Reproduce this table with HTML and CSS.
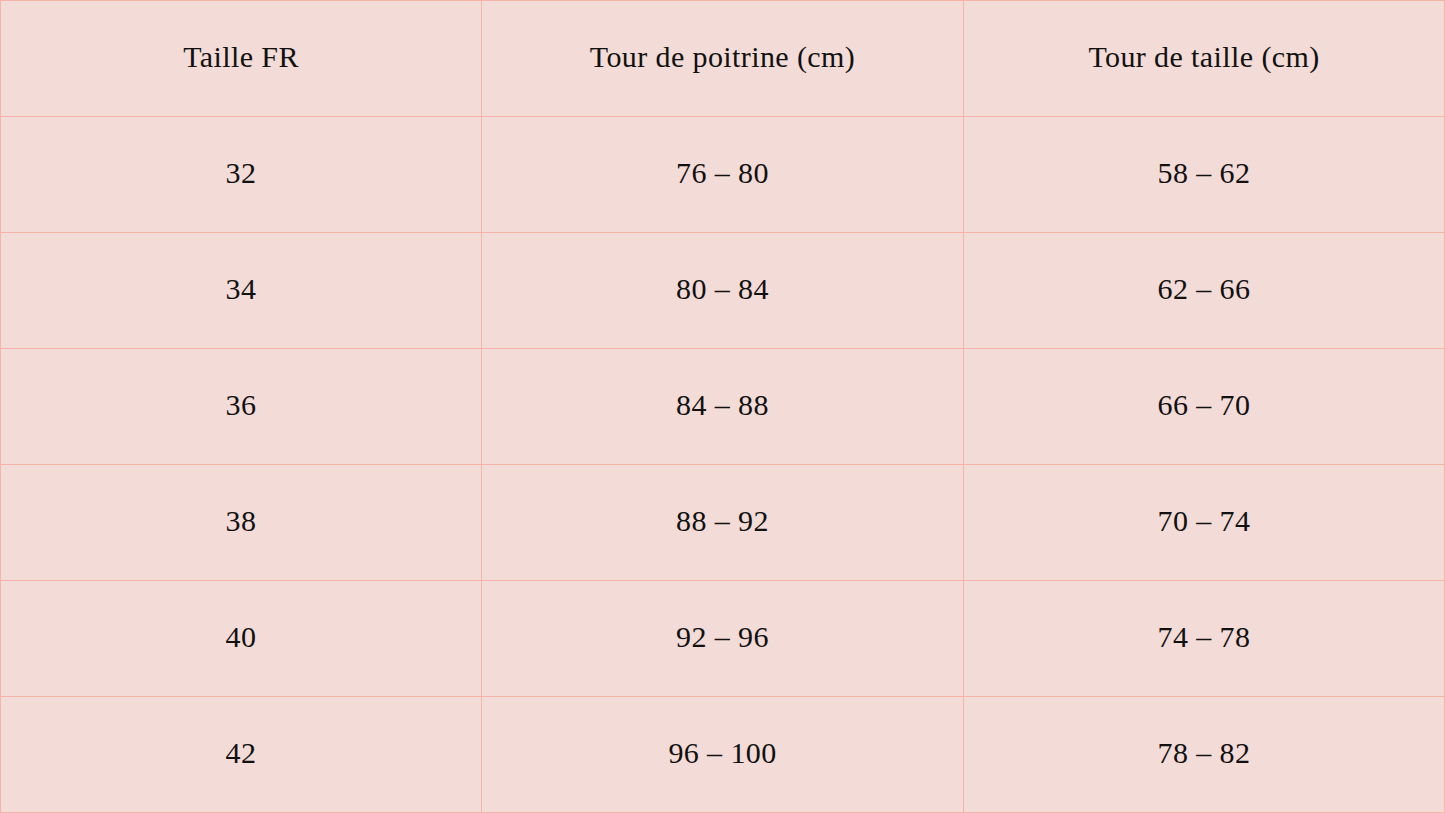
FILE: index.html
```html
<!DOCTYPE html>
<html lang="fr">
<head>
<meta charset="utf-8">
<title>Guide des tailles</title>
<link rel="stylesheet" href="styles.css">
</head>
<body>
<div class="chart">
  <div class="cell">Taille FR</div>
  <div class="cell">Tour de poitrine (cm)</div>
  <div class="cell">Tour de taille (cm)</div>
  <div class="cell">32</div>
  <div class="cell">76 – 80</div>
  <div class="cell">58 – 62</div>
  <div class="cell">34</div>
  <div class="cell">80 – 84</div>
  <div class="cell">62 – 66</div>
  <div class="cell">36</div>
  <div class="cell">84 – 88</div>
  <div class="cell">66 – 70</div>
  <div class="cell">38</div>
  <div class="cell">88 – 92</div>
  <div class="cell">70 – 74</div>
  <div class="cell">40</div>
  <div class="cell">92 – 96</div>
  <div class="cell">74 – 78</div>
  <div class="cell">42</div>
  <div class="cell">96 – 100</div>
  <div class="cell">78 – 82</div>
</div>
</body>
</html>
```
FILE: styles.css
```css
html, body {
  margin: 0;
  padding: 0;
  background: #f3dbd7;
}
.chart {
  display: grid;
  grid-template-columns: 480px 481px 480px;
  grid-auto-rows: 115px;
  gap: 1px;
  padding: 1px;
  width: 1445px;
  height: 813px;
  box-sizing: border-box;
  background: #f6b4a6;
}
.cell {
  background: #f3dbd7;
  display: flex;
  align-items: center;
  justify-content: center;
  padding-bottom: 4px;
  font-family: "Liberation Serif", "Times New Roman", serif;
  font-size: 30px;
  letter-spacing: 0.4px;
  color: #111;
}
```
